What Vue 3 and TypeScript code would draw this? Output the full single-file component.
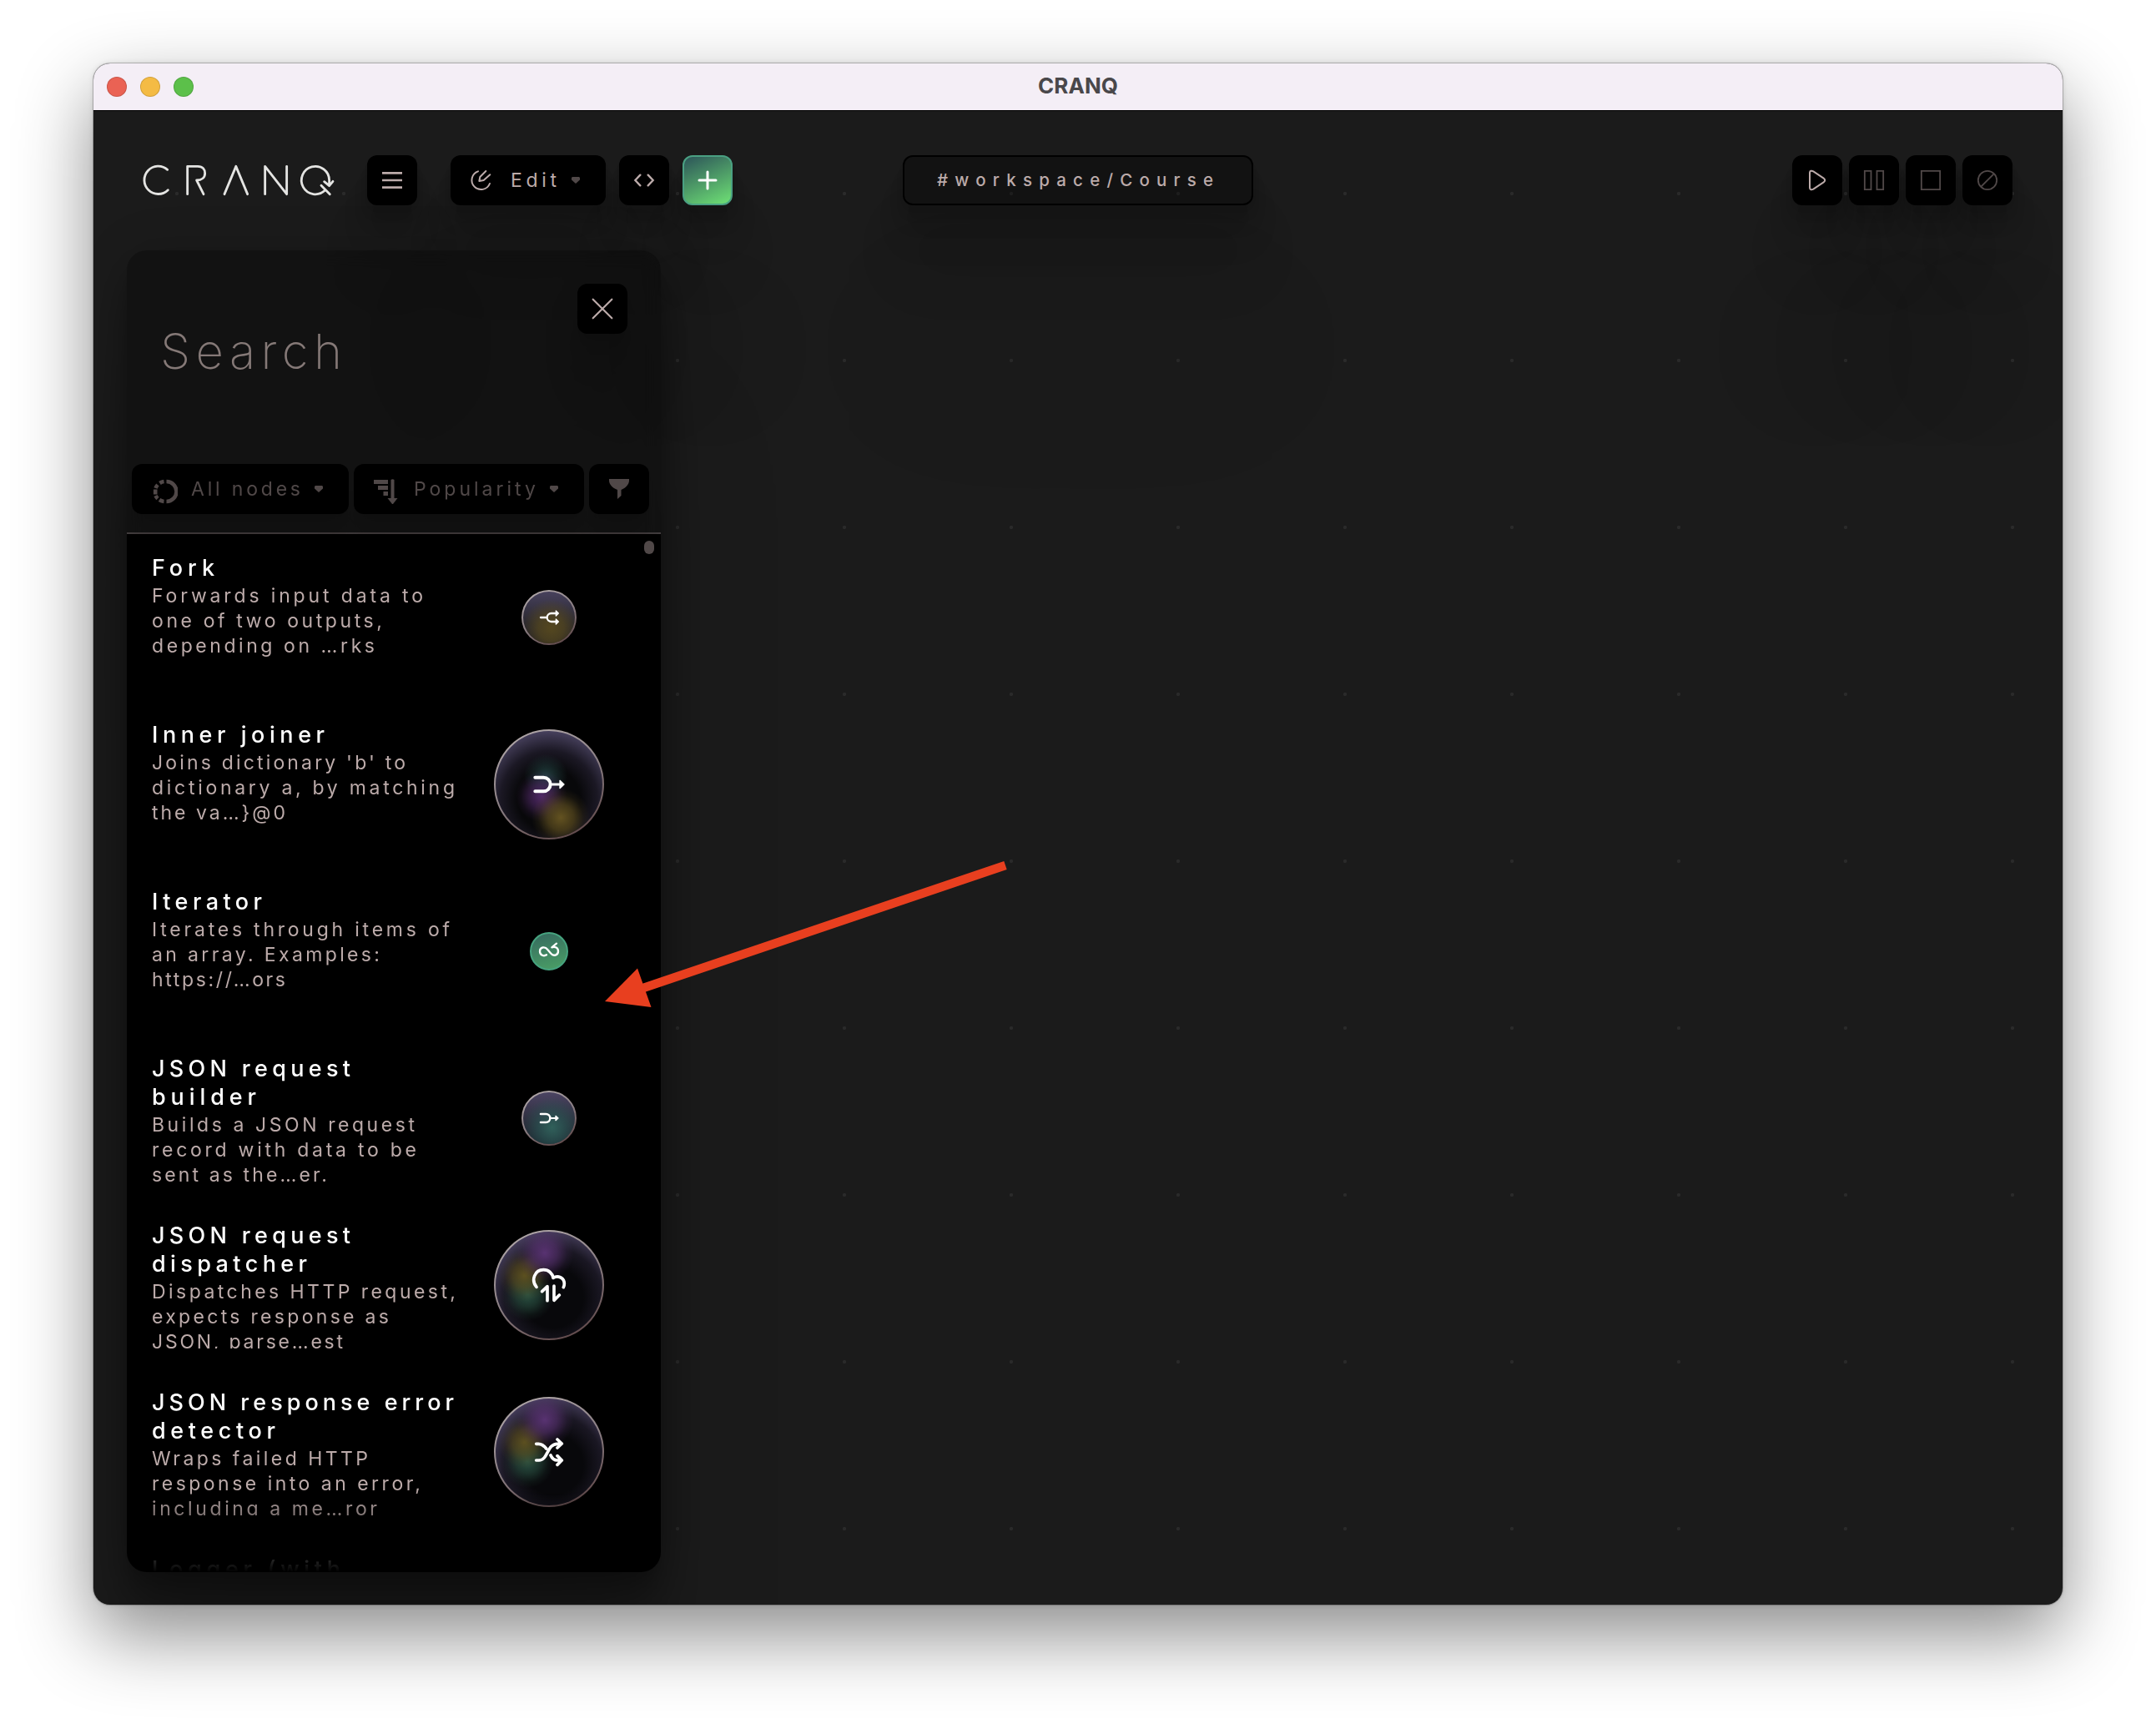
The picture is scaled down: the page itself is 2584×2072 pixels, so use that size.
<script setup lang="ts">
import type { Directive } from 'vue'

type Line = [text: string, width: number]
type Glyph = 'fork' | 'join' | 'joinSmall' | 'loop' | 'cloud' | 'shuffle'

interface NodeItem {
  title: Line[]
  description: Line[]
  orb: string
  glyph: Glyph
}

// Tracks a line of text out so that it spans the given width.
const vTrack: Directive<HTMLElement, number> = {
  mounted(el, { value }) {
    el.style.letterSpacing = '0px'
    const range = document.createRange()
    range.selectNodeContents(el)
    const natural = range.getBoundingClientRect().width
    const gaps = Math.max(1, (el.textContent ?? '').length - 1)
    el.style.letterSpacing = `${((value - natural) / gaps).toFixed(3)}px`
  },
}

const nodes: NodeItem[] = [
  {
    title: [['Fork', 75]],
    description: [['Forwards input data to', 325], ['one of two outputs,', 276], ['depending on …rks', 267]],
    orb: 'medium amber',
    glyph: 'fork',
  },
  {
    title: [['Inner joiner', 207]],
    description: [["Joins dictionary 'b' to", 304], ['dictionary a, by matching', 363], ['the va…}@0', 160]],
    orb: 'large lower',
    glyph: 'join',
  },
  {
    title: [['Iterator', 132]],
    description: [['Iterates through items of', 357], ['an array. Examples:', 273], ['https://…ors', 160]],
    orb: 'small green',
    glyph: 'loop',
  },
  {
    title: [['JSON request', 238], ['builder', 125]],
    description: [['Builds a JSON request', 315], ['record with data to be', 317], ['sent as the…er.', 210]],
    orb: 'medium teal',
    glyph: 'joinSmall',
  },
  {
    title: [['JSON request', 238], ['dispatcher', 186]],
    description: [['Dispatches HTTP request,', 364], ['expects response as', 284], ['JSON, parse…est', 229]],
    orb: 'large upper',
    glyph: 'cloud',
  },
  {
    title: [['JSON response error', 362], ['detector', 148]],
    description: [['Wraps failed HTTP', 259], ['response into an error,', 322], ['including a me…ror', 270]],
    orb: 'large upper',
    glyph: 'shuffle',
  },
  { title: [['Logger (with', 226]], description: [], orb: 'small hidden', glyph: 'join' },
]
</script>

<template>
  <div class="desktop">
    <div class="window">
      <header class="titlebar">
        <div class="lights"><i class="red" /><i class="yellow" /><i class="lime" /></div>
        <div class="app-title"><span v-track="96">CRANQ</span></div>
        <div class="lights" />
      </header>

      <main class="canvas">
        <div class="toolbar">
          <div class="group left">
            <svg class="logo" viewBox="210 408 700 120" fill="none">
              <path d="M302 430A50 50 0 1 0 304 503" />
              <path d="M374 518V418H411C430 418 437 430 437 443C437 458 425 468 407 468L432 518" />
              <path d="M507 518L548.500 418L590 518" />
              <path d="M653 518V418L731 518V418" />
              <path d="M884 487V468A50 50 0 1 0 868 505M866 473L884 488L897 472M855 487L886 518" />
            </svg>
            <button class="btn menu">
              <svg viewBox="-45 -45 90 90"><path d="M-36-26H36M-36 0H36M-36 26H36" stroke-width="8" /></svg>
            </button>
            <button class="btn edit">
              <svg class="edit-icon" viewBox="-45 -45 90 90">
                <path d="M-9-32A33.500 33.500 0 1 0 33 12M19-33L-2-12L-5 3L11 0L34-20" stroke-width="6" stroke-linecap="round" stroke-linejoin="round" />
              </svg>
              <span v-track="55">Edit</span>
              <svg class="caret" viewBox="0 0 10 8"><path d="M1 0H9L10 1V3.500L5 8L0 3.500V1Z" /></svg>
            </button>
            <button class="btn code">
              <svg viewBox="-45 -45 90 90"><path d="M-14-19L-32 0L-14 19M14-19L32 0L14 19" stroke-width="7" stroke-linecap="round" /></svg>
            </button>
            <button class="btn add">
              <svg viewBox="-45 -45 90 90"><path d="M-30 0H30M0-30V30" stroke="#fff" stroke-width="9" stroke-linecap="round" /></svg>
            </button>
          </div>
          <div class="path"><span v-track="331">#workspace/Course</span></div>
          <div class="group right">
            <button class="btn">
              <svg viewBox="-45 -45 90 90"><path d="M-27-27C-27-35-20-35-14-32L23-7C29-3 29 3 23 7L-14 32C-20 35-27 35-27 27Z" stroke-width="6" /></svg>
            </button>
            <button class="btn dim">
              <svg viewBox="-45 -45 90 90"><path d="M-33.500-33.500H-10.500V33.500H-33.500ZM10.500-33.500H33.500V33.500H10.500Z" stroke-width="5.500" /></svg>
            </button>
            <button class="btn dim">
              <svg viewBox="-45 -45 90 90"><path d="M-33.500-33.500H33.500V33.500H-33.500Z" stroke-width="5.500" /></svg>
            </button>
            <button class="btn dim">
              <svg viewBox="-45 -45 90 90"><circle r="33.500" stroke-width="5.500" /><path d="M-23 23L23-23" stroke-width="5.500" /></svg>
            </button>
          </div>
        </div>

        <aside class="panel">
          <div class="panel-head">
            <div class="search-row">
              <div class="search"><span v-track="218">Search</span></div>
              <button class="btn close">
                <svg viewBox="-45 -45 90 90"><path d="M-34-34L34 34M34-34L-34 34" stroke-width="6.500" stroke-linecap="round" /></svg>
              </button>
            </div>
            <div class="filters">
              <button class="btn dim nodes">
                <svg class="filter-icon ring" viewBox="-15 -15 30 30">
                  <path d="M1.500-12A12 12 0 0 1 1.500 12M-1.500-12A12 12 0 0 0-6.500-10M-9-8A12 12 0 0 0-11.500-4M-11.800-2.500V3.500M-11.500 5A12 12 0 0 0-9 8.500M-7 10A12 12 0 0 0-1.500 12" stroke-width="4.600" />
                </svg>
                <span v-track="131">All nodes</span>
                <svg class="caret" viewBox="0 0 10 8"><path d="M1 0H9L10 1V3.500L5 8L0 3.500V1Z" /></svg>
              </button>
              <button class="btn dim sort">
                <svg class="filter-icon solid" viewBox="0 0 30 30">
                  <path d="M1 1H18V6H1ZM6 8H18V13H6ZM12.500 15H18V20H12.500ZM21.500 1Q23.500-.5 25.500 1V23H29.500L24 30H23L17.500 23H21.500Z" />
                </svg>
                <span v-track="146">Popularity</span>
                <svg class="caret" viewBox="0 0 10 8"><path d="M1 0H9L10 1V3.500L5 8L0 3.500V1Z" /></svg>
              </button>
              <button class="btn dim funnel">
                <svg class="funnel-icon solid" viewBox="0 0 24 24">
                  <path d="M0 0H24V2C24 6 20 11 14.500 13V20L10 24V13C4 11 0 6 0 2Z" />
                </svg>
              </button>
            </div>
          </div>

          <div class="list-wrap">
            <div class="list">
              <article v-for="(node, n) in nodes" :key="n" class="item">
                <div class="copy">
                  <h3>
                    <span v-for="[text, width] in node.title" :key="text"><b v-track="width">{{ text }}</b></span>
                  </h3>
                  <p>
                    <span v-for="[text, width] in node.description" :key="text"><em v-track="width">{{ text }}</em></span>
                  </p>
                </div>
                <div class="orb-slot">
                  <div class="orb" :class="node.orb">
                    <svg viewBox="-66 -66 132 132">
                      <template v-if="node.glyph === 'fork'">
                        <path d="M-30 0H-8M26-15H8A15 15 0 0 0 8 15H26" stroke-width="7" />
                        <path class="head" d="M25-24L34-15L25-6ZM25 6L34 15L25 24Z" />
                      </template>
                      <template v-else-if="node.glyph === 'join'">
                        <path d="M-50-25H-20A25 25 0 0 1-20 25H-50" stroke-width="12" />
                        <path d="M6 0H40" stroke-width="9" />
                        <path class="head" d="M39-14L54 0L39 14Z" />
                      </template>
                      <template v-else-if="node.glyph === 'joinSmall'">
                        <path d="M-30-15H-11A15 15 0 0 1-11 15H-30" stroke-width="7.500" />
                        <path d="M5 0H25" stroke-width="5.500" />
                        <path class="head" d="M24-8L33 0L24 8Z" />
                      </template>
                      <template v-else-if="node.glyph === 'loop'">
                        <path d="M-9 13C-18 19-33 15-33 0C-33-15-15-19-5-6L7 8C15 19 33 15 33 0C33-13 22-18 10-14L27-28" stroke-width="7" />
                      </template>
                      <template v-else-if="node.glyph === 'cloud'">
                        <path d="M-45 7C-66-18-51-55-20-55C-1-55 12-42 15-26C31-36 55-28 55-5C55 1 54 5 52 8M-6 56V5L-25 23M18 3V55L37 36" stroke-width="11" />
                      </template>
                      <template v-else>
                        <path d="M-46-29H-38C-24-29-17-21-10-12M-46 30H-36C-3 30-8-29 30-29H44M6 12C12 26 20 30 30 30H44M30-45L46-30L30-15M30 14L46 30L30 46" stroke-width="11" />
                      </template>
                    </svg>
                  </div>
                </div>
              </article>
            </div>
            <i class="thumb" />
          </div>
        </aside>
      </main>
    </div>

    <svg class="pointer" viewBox="720 1030 492 182">
      <path d="M1205 1037L768 1185" stroke="#e83f1f" stroke-width="10.500" />
      <path d="M725 1200L764 1160.500L780.500 1207Z" fill="#e83f1f" />
    </svg>
  </div>
</template>

<style>
body {
  margin: 0;
  background: #fff;
}
</style>

<style scoped>
.desktop {
  --lift:
    0 5.6px 4.4px rgba(0, 0, 0, 0.034),
    0 13.4px 10.6px rgba(0, 0, 0, 0.048),
    0 25px 20px rgba(0, 0, 0, 0.06),
    0 44.6px 35.8px rgba(0, 0, 0, 0.072),
    0 83.6px 66.8px rgba(0, 0, 0, 0.086),
    0 200px 160px rgba(0, 0, 0, 0.12);
  position: relative;
  box-sizing: border-box;
  width: 2584px;
  height: 2072px;
  padding: 76px 112px 149px;
  overflow: hidden;
  background: #fff;
  color: #bcabaa;
  font-family: Inter, 'Open Sans', sans-serif;
}

.window {
  display: flex;
  flex-direction: column;
  height: 1847px;
  overflow: hidden;
  border-radius: 20px;
  background: #1b1b1b;
  box-shadow:
    0 0 0 1px rgba(0, 0, 0, 0.22),
    0 0 6px rgba(0, 0, 0, 0.12),
    0 36px 90px rgba(0, 0, 0, 0.46);
}

.titlebar {
  display: flex;
  flex: none;
  align-items: center;
  height: 56px;
  background: #f4eef6;
}

.lights {
  display: flex;
  flex: 1;
  gap: 16px;
  padding-left: 16px;
}

.lights i {
  box-sizing: border-box;
  width: 24px;
  height: 24px;
  border: 1px solid rgba(0, 0, 0, 0.14);
  border-radius: 50%;
}

.red { background: #ea6254; }
.yellow { background: #f4bb44; }
.lime { background: #5cc04a; }

.app-title {
  width: 96px;
  padding-bottom: 2px;
  color: #49474a;
  font-size: 26px;
  font-weight: 700;
  line-height: 52px;
  white-space: nowrap;
}

.canvas {
  flex: 1;
  border-top: 1px solid #000;
  background: radial-gradient(circle at 100px 100px, #2a2a2a 1.8px, transparent 2.4px) 0 -1px / 200px 200px;
}

.toolbar {
  display: grid;
  grid-template-columns: 1fr 420px 1fr;
  padding: 53px 60px 0;
}

.group {
  display: flex;
}

.right {
  justify-content: flex-end;
  gap: 8px;
}

.logo {
  width: 233.3px;
  height: 40px;
  margin: 10px 36.7px 0 -2px;
  stroke: #e4e4e2;
  stroke-width: 8.5;
  stroke-linecap: round;
  stroke-linejoin: round;
}

.btn {
  display: flex;
  flex: none;
  align-items: center;
  justify-content: center;
  box-sizing: border-box;
  width: 60px;
  height: 60px;
  padding: 0;
  border: 0;
  border-radius: 12px;
  background: #000;
  box-shadow: var(--lift);
  color: #bcabaa;
  font: 400 23px / 60px Inter, 'Open Sans', sans-serif;
  text-align: left;
  white-space: nowrap;
}

.btn svg {
  flex: none;
  width: 30px;
  height: 30px;
  fill: none;
  stroke: currentColor;
}

.btn.dim {
  color: #504848;
}

.btn .caret {
  width: 10px;
  height: 8px;
  fill: #504848;
  stroke: none;
}

.btn .solid {
  fill: currentColor;
  stroke: none;
}

.edit {
  justify-content: flex-start;
  width: 186px;
  margin: 0 16px 0 40px;
  padding-left: 21px;
}

.edit span {
  width: 60px;
  margin: 0 13px 0 21px;
}

.add {
  margin-left: 16px;
  border: 2px solid #4aa082;
  background: linear-gradient(155deg, #2f5a5a 4%, #6cdb74 96%);
}

.path {
  box-sizing: border-box;
  height: 60px;
  padding-left: 39px;
  border: 2px solid #000;
  border-radius: 12px;
  background: rgba(0, 0, 0, 0.3);
  box-shadow: var(--lift);
  font-size: 20.500px;
  font-weight: 500;
  line-height: 55px;
  white-space: nowrap;
}

.panel {
  display: flex;
  flex-direction: column;
  width: 640px;
  height: 1584px;
  margin: 54px 0 0 40px;
  border-radius: 24px;
  background: rgba(0, 0, 0, 0.3);
  box-shadow:
    0 0 60px rgba(0, 0, 0, 0.12),
    var(--lift),
    0 30px 60px rgba(0, 0, 0, 0.22);
  backdrop-filter: blur(10px);
}

.panel-head {
  box-sizing: border-box;
  height: 340px;
  border-bottom: 2px solid #453f40;
}

.search-row {
  display: flex;
  justify-content: space-between;
  height: 216px;
  padding: 40px 40px 0;
}

.search {
  padding-top: 46px;
  color: #857977;
  font-size: 58px;
  font-weight: 200;
  line-height: 70px;
  white-space: nowrap;
}

.filters {
  display: flex;
  gap: 6px;
  padding-left: 6px;
}

.nodes {
  justify-content: flex-start;
  width: 260px;
  padding-left: 25px;
}

.sort {
  justify-content: flex-start;
  width: 276px;
  padding-left: 23px;
}

.funnel {
  width: 72px;
}

.btn .filter-icon {
  margin-top: 6px;
}

.nodes span {
  width: 132px;
  margin: 0 16px 0 16px;
}

.sort span {
  width: 146px;
  margin: 0 17px 0 19px;
}

.btn .funnel-icon {
  width: 24px;
  height: 24px;
}

.list-wrap {
  position: relative;
  flex: 1;
  overflow: hidden;
  border-radius: 0 0 24px 24px;
  background: #000;
}

.list {
  height: 1244px;
  overflow: hidden;
  mask-image: linear-gradient(#000 1144px, transparent 1244px);
}

.item {
  display: flex;
  box-sizing: border-box;
  height: 200px;
  padding-left: 30px;
}

.copy {
  width: 380px;
  height: 153px;
  margin-top: 23px;
  overflow: hidden;
  white-space: nowrap;
}

h3,
p {
  margin: 0;
}

h3 span,
p span {
  display: block;
}

h3 {
  padding-top: 1px;
  color: #fff;
  font-size: 27px;
  line-height: 34px;
}

h3 b {
  font-weight: 450;
}

p {
  margin-top: 1px;
  font-size: 23px;
  line-height: 30px;
}

p em {
  font-style: normal;
}

.orb-slot {
  display: grid;
  place-items: center;
  width: 192px;
  height: 200px;
}

.orb {
  display: grid;
  place-items: center;
  box-sizing: border-box;
  border: 2px solid transparent;
  border-radius: 50%;
}

.orb svg {
  width: 44px;
  height: 44px;
  margin: -6px;
  fill: none;
  stroke: #fff;
  stroke-linecap: round;
  stroke-linejoin: round;
}

.orb .head {
  fill: #fff;
  stroke-width: 4;
}

.small { width: 46px; height: 46px; }
.medium { width: 66px; height: 66px; }
.large { width: 132px; height: 132px; }
.hidden { visibility: hidden; }

.green {
  border-color: #46a37f;
  background: linear-gradient(165deg, #35695f, #4ba066);
}

.amber {
  background:
    radial-gradient(circle at 54% 70%, #54471f 0, rgba(84, 71, 31, 0.75) 28%, transparent 62%) padding-box,
    linear-gradient(#47415c, #2a2830 60%, #1f1d22) padding-box,
    linear-gradient(155deg, #b8b0b0, #8b7f84 50%, #563c3c) border-box;
}

.teal {
  background:
    radial-gradient(circle at 56% 68%, #30605a 0, rgba(42, 84, 82, 0.7) 30%, transparent 66%) padding-box,
    linear-gradient(#4b4462, #2b2b3a 60%, #18202a) padding-box,
    linear-gradient(155deg, #b8b0b0, #8b7f84 50%, #563c3c) border-box;
}

.lower {
  background:
    radial-gradient(circle at 61% 81%, rgba(104, 86, 34, 0.95) 0, rgba(104, 86, 34, 0.6) 12%, rgba(104, 86, 34, 0.15) 21%, transparent 27%) padding-box,
    radial-gradient(circle at 43% 61%, rgba(84, 42, 108, 0.95) 0, rgba(84, 42, 108, 0.55) 13%, rgba(84, 42, 108, 0.14) 23%, transparent 29%) padding-box,
    radial-gradient(circle at 47% 42%, rgba(36, 68, 68, 0.9) 0, rgba(36, 68, 68, 0.4) 14%, transparent 26%) padding-box,
    radial-gradient(circle at 50% 64%, #08080a 36%, #1b1824 56%, #4d4665 82%) padding-box,
    linear-gradient(155deg, #b8b0b0, #8b7f84 50%, #563c3c) border-box;
}

.upper {
  background:
    radial-gradient(circle at 46% 20%, rgba(92, 52, 118, 0.95) 0, rgba(92, 52, 118, 0.6) 12%, rgba(92, 52, 118, 0.15) 22%, transparent 28%) padding-box,
    radial-gradient(circle at 27% 41%, rgba(98, 84, 32, 0.92) 0, rgba(98, 84, 32, 0.55) 12%, rgba(98, 84, 32, 0.15) 20%, transparent 26%) padding-box,
    radial-gradient(circle at 30% 59%, rgba(44, 86, 70, 0.92) 0, rgba(44, 86, 70, 0.55) 12%, rgba(44, 86, 70, 0.15) 21%, transparent 27%) padding-box,
    radial-gradient(circle at 54% 62%, #08080b 34%, #1a1723 56%, #504769 82%) padding-box,
    linear-gradient(155deg, #b8b0b0, #8b7f84 50%, #563c3c) border-box;
}

.thumb {
  position: absolute;
  top: 8px;
  right: 8px;
  width: 12px;
  height: 16px;
  border-radius: 6px;
  background: #504848;
}

.pointer {
  position: absolute;
  top: 1030px;
  left: 720px;
  width: 492px;
  height: 182px;
}
</style>
